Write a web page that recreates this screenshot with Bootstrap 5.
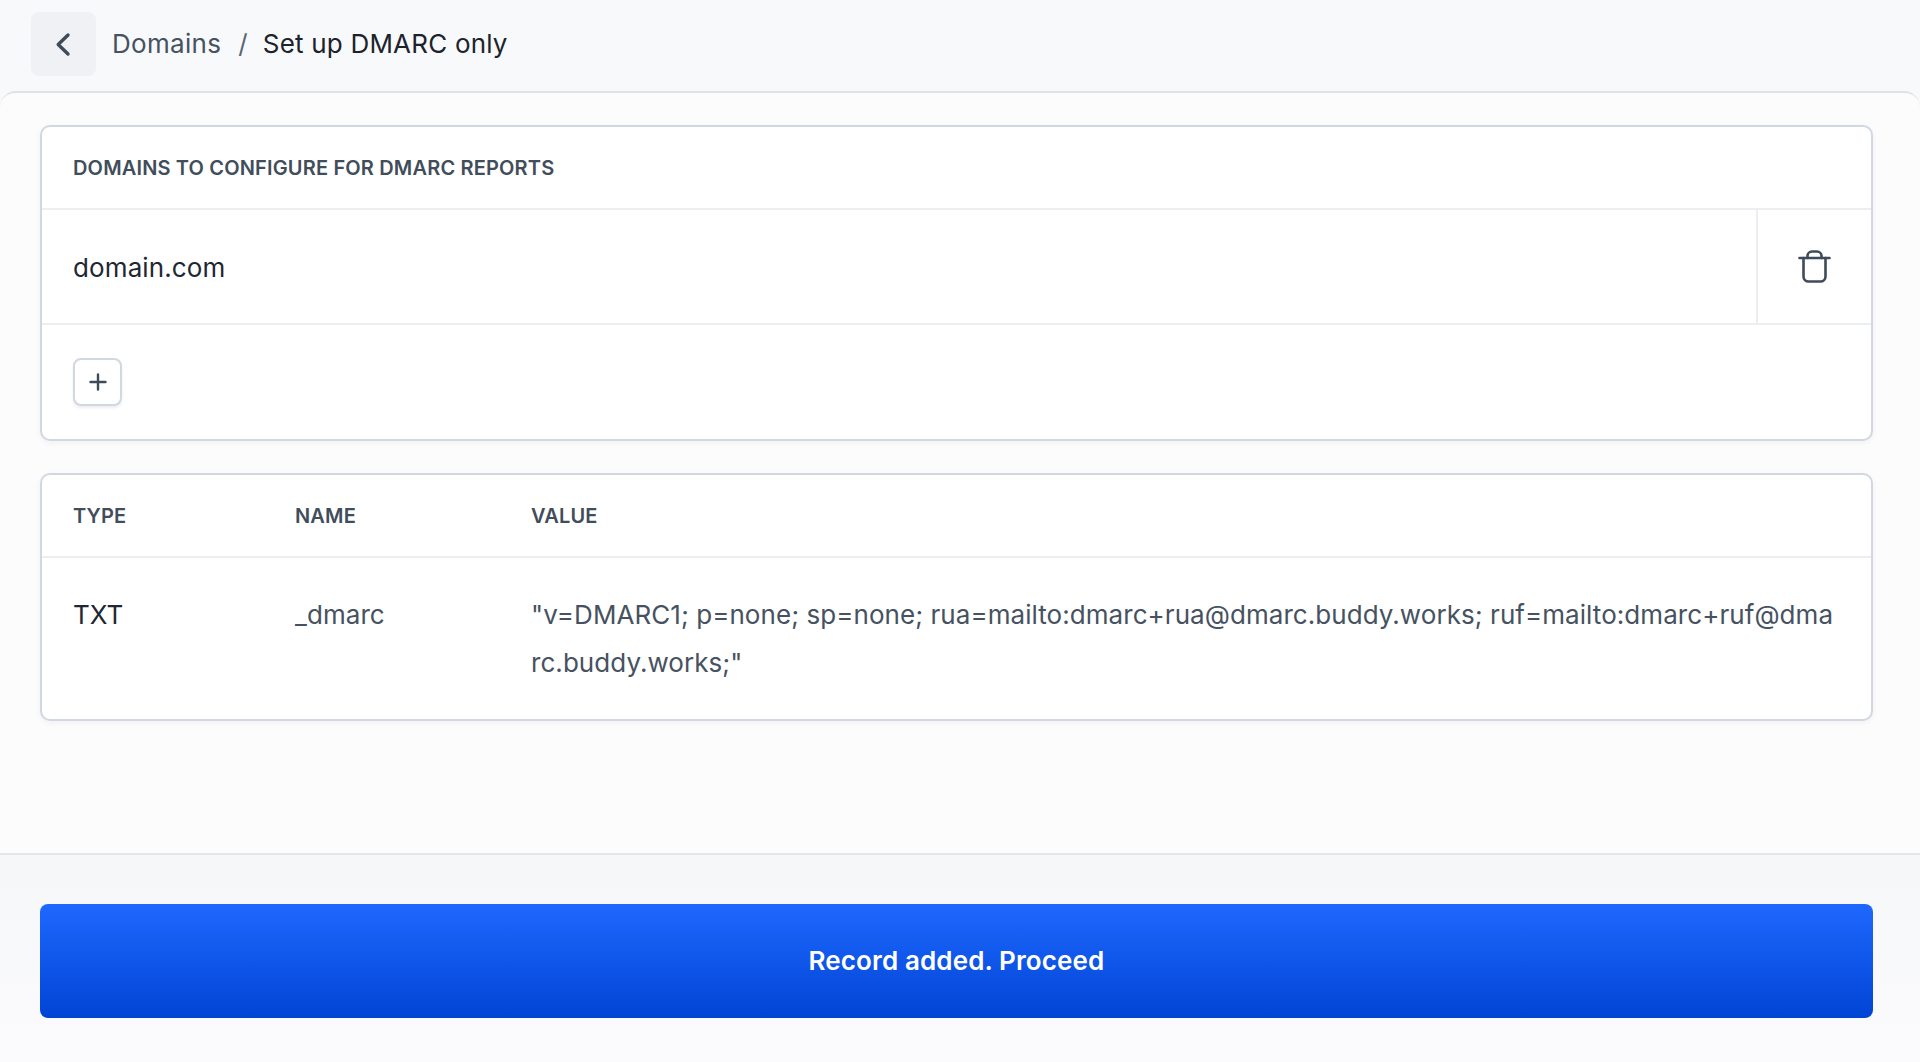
<!doctype html>
<html lang="en"><head><meta charset="utf-8"><title>Set up DMARC only</title>
<link href="https://cdn.jsdelivr.net/npm/bootstrap@5.3.0/dist/css/bootstrap.min.css" rel="stylesheet">
<style>
html,body{height:100%}
body{font-family:Inter,"Liberation Sans",sans-serif;background:#f8f9fb;color:#1c232d;height:1062px;overflow:hidden}
.top-bar{height:91px;padding:12px 0 0 31px}
.back-btn{width:65px;height:64px;padding:0 2px 0 0;background:#eff1f4;border:0;border-radius:8px;color:#3f4b59}
.crumbs{font-size:26px;margin-left:16px;letter-spacing:.2px}
.crumbs .crumb-link{color:#465261;letter-spacing:.3px}
.crumbs .sep{color:#5b6675;margin:0 15px 0 17px}
.main-panel{height:764px;background:#fcfcfd;border-top:2px solid #dfe3e8;border-bottom:2px solid #e3e6ea;border-radius:16px 16px 0 0;padding:32px 47px 0 40px}
.box{background:#fff;border:2px solid #d2d8e0;border-radius:10px;box-shadow:0 2px 6px rgba(30,40,60,.05)}
.box-head{height:83px;padding:0 31px;font-size:20px;font-weight:600;letter-spacing:.16px;color:#414d5b;border-bottom:2px solid #eceef2}
.col-type{width:222px}.col-name{width:236px}
.domain-row{height:115px;border-bottom:2px solid #eceef2;font-size:26px;letter-spacing:.12px;color:#1f2732}
.domain-name{padding:1px 0 0 31px}
.trash-cell{width:115px;border-left:2px solid #eceef2}
.add-row{height:114px;padding-left:31px}
.add-btn{width:49px;height:48px;padding:0;background:#fff;border:2px solid #d2d8e0;border-radius:8px;box-shadow:0 2px 3px rgba(30,40,60,.08)}
.record-box{margin-top:32px}
.record-row{padding:33px 31px 32px;font-size:26px;line-height:48px;letter-spacing:.06px;color:#1f2732}
.rec-val{flex:1;word-break:break-all;color:#465261}
.rec-name{color:#465261}
.foot{height:207px;padding:49px 47px 0 40px;background:linear-gradient(#f6f7f9,#fbfbfd)}
.go-btn{height:114px;padding:0 0 2px;font-size:26px;font-weight:600;letter-spacing:.12px;color:#fff;border:0;border-radius:8px;background:linear-gradient(#1f68ff,#0044d4)}
</style></head><body>
<div class="top-bar d-flex align-items-start">
<button class="back-btn d-flex align-items-center justify-content-center" aria-label="Back"><svg width="16" height="25" viewBox="0 0 16 25" fill="none" stroke="currentColor" stroke-width="3.4" stroke-linecap="round" stroke-linejoin="round"><path d="M13 3 3.200 12.500 13 22"/></svg></button>
<div class="crumbs d-flex align-items-center h-100 pb-3"><span class="crumb-link">Domains</span><span class="sep">/</span><span>Set up DMARC only</span></div>
</div>
<div class="main-panel">
<div class="box">
<div class="box-head d-flex align-items-center">DOMAINS TO CONFIGURE FOR DMARC REPORTS</div>
<div class="domain-row d-flex align-items-stretch"><div class="domain-name flex-grow-1 d-flex align-items-center">domain.com</div>
<div class="trash-cell d-flex align-items-center justify-content-center"><svg width="33" height="33" viewBox="0 0 33 33" fill="none" stroke="#3f4b59" stroke-width="2.6" stroke-linecap="round" stroke-linejoin="round"><path d="M1.500 8h30"/><path d="M9.500 8V6a4.500 4.500 0 0 1 4.500-4.500h5A4.500 4.500 0 0 1 23.500 6v2"/><path d="M5.500 8v18.500a5 5 0 0 0 5 5h12a5 5 0 0 0 5-5V8"/></svg></div></div>
<div class="add-row d-flex align-items-center"><button class="add-btn d-flex align-items-center justify-content-center" aria-label="Add"><svg width="18" height="18" viewBox="0 0 18 18" fill="none" stroke="#3f4b59" stroke-width="2.4" stroke-linecap="round"><path d="M9 1.500v15M1.500 9h15"/></svg></button></div>
</div>
<div class="box record-box">
<div class="box-head d-flex align-items-center"><div class="col-type">TYPE</div><div class="col-name">NAME</div><div>VALUE</div></div>
<div class="record-row d-flex"><div class="col-type">TXT</div><div class="col-name rec-name">_dmarc</div><div class="rec-val">"v=DMARC1; p=none; sp=none; rua=mailto:dmarc+rua@dmarc.buddy.works; ruf=mailto:dmarc+ruf@dmarc.buddy.works;"</div></div>
</div>
</div>
<div class="foot"><button class="go-btn w-100">Record added. Proceed</button></div>
<script src="https://cdn.jsdelivr.net/npm/bootstrap@5.3.0/dist/js/bootstrap.bundle.min.js"></script>
</body></html>
